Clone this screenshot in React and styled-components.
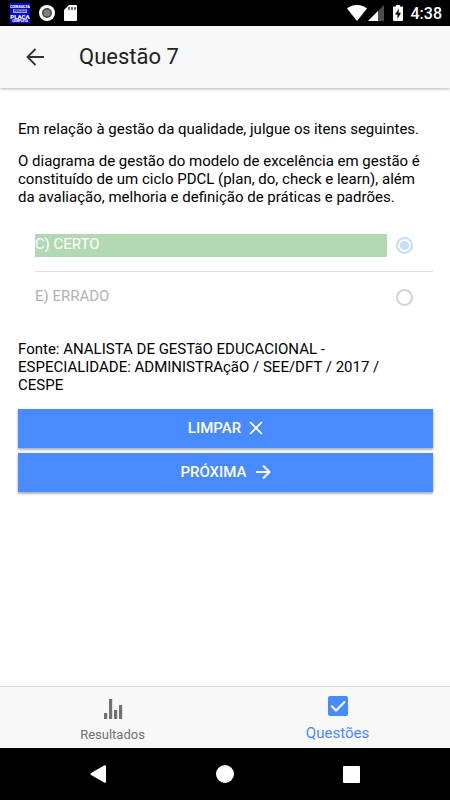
import React, { useState } from "react";
import styled, { createGlobalStyle } from "styled-components";

const GlobalStyle = createGlobalStyle`
  * {
    box-sizing: border-box;
  }
  body {
    margin: 0;
    background: #fff;
    color: #000;
    font-family: Roboto, "Liberation Sans", sans-serif;
  }
`;

const Page = styled.div`
  min-height: 100vh;
  display: flex;
  flex-direction: column;
`;

/* Android status bar */
const StatusBar = styled.div`
  height: 26px;
  padding: 0 8px 0 10px;
  display: flex;
  align-items: center;
  justify-content: space-between;
  background: #000;
  color: #fff;
`;

const StatusGroup = styled.div`
  display: flex;
  align-items: center;
  gap: ${({ $gap }) => $gap}px;
  svg {
    display: block;
  }
`;

const Clock = styled.span`
  padding: 2px 0 0 3px;
  font-size: 16px;
  font-weight: 500;
  line-height: 24px;
`;

const Header = styled.header`
  height: 62px;
  padding: 0 24px;
  display: flex;
  align-items: center;
  gap: 33px;
  background: #f8f8f8;
  box-shadow: 0 1px 3px rgba(0, 0, 0, 0.3);
`;

const BackButton = styled.button`
  padding: 0;
  border: 0;
  background: none;
  color: #333;
  cursor: pointer;
  svg {
    display: block;
  }
`;

const Title = styled.h1`
  margin: 0;
  font-size: 22px;
  font-weight: 400;
  line-height: 28px;
  color: #222;
`;

const Content = styled.main`
  flex: 1;
  padding: 32px 17px 16px 18px;
`;

const Paragraph = styled.p`
  margin: 0 0 14px;
  font-size: 15px;
  line-height: 18px;
`;

const Source = styled(Paragraph)`
  padding-right: 16px;
`;

const Options = styled.div`
  margin: 0 0 17px 17px;
`;

const Option = styled.label`
  padding: 14px 20px 14px 0;
  display: flex;
  align-items: center;
  gap: 9px;
  & + & {
    border-top: 1px solid #dedede;
  }
`;

const OptionText = styled.span`
  flex: 1;
  height: 23px;
  font-size: 15px;
  line-height: 20px;
  color: ${({ $correct }) => ($correct ? "#fff" : "#b2b2b2")};
  background: ${({ $correct }) => ($correct ? "#b2d9b2" : "transparent")};
`;

const Radio = styled.input`
  appearance: none;
  width: 17px;
  height: 17px;
  margin: 0;
  border: 2px solid #d3d3d3;
  border-radius: 50%;
  &:checked {
    border-color: #c7dbff;
    background: radial-gradient(circle, #c7dbff 4px, transparent 5px);
  }
`;

const Actions = styled.div`
  margin-top: 15px;
  display: flex;
  flex-direction: column;
  gap: 5px;
`;

const ActionButton = styled.button`
  height: 39px;
  padding: 0 6px 2px;
  border: 0;
  display: flex;
  align-items: center;
  justify-content: center;
  gap: 8px;
  background: #488aff;
  color: #fff;
  font-family: inherit;
  font-size: 15px;
  font-weight: 500;
  box-shadow: 0 2px 2px rgba(0, 0, 0, 0.2), 0 1px 3px rgba(0, 0, 0, 0.2);
  cursor: pointer;
`;

const Tabs = styled.nav`
  height: 62px;
  display: flex;
  background: #f8f8f8;
  border-top: 1px solid #dedede;
`;

const Tab = styled.a`
  flex: 1;
  display: flex;
  flex-direction: column;
  align-items: center;
  justify-content: flex-end;
  gap: ${({ $active }) => ($active ? 7 : 8)}px;
  padding-bottom: 5px;
  color: ${({ $active }) => ($active ? "#488aff" : "#727272")};
  font-size: ${({ $active }) => ($active ? 15 : 13)}px;
  line-height: ${({ $active }) => ($active ? 20 : 16)}px;
  text-decoration: none;
`;

const SystemBar = styled.div`
  height: 52px;
  padding: 0 35px;
  display: flex;
  align-items: center;
  justify-content: space-between;
  background: #000;
`;

const SystemButton = styled.button`
  flex: 1;
  height: 100%;
  padding: 0;
  border: 0;
  display: flex;
  align-items: center;
  justify-content: center;
  background: none;
`;

const AppLogo = () => (
  <svg width="20" height="20" viewBox="0 0 20 20">
    <rect width="20" height="20" fill="#0808d8" />
    <rect x="3" y="6" width="14" height="4" fill="#a4a4d4" />
    <g fill="#fff" textAnchor="middle" fontFamily="Roboto, sans-serif" fontWeight="900">
      <text x="10" y="5" fontSize="4">CONSULTA</text>
      <text x="10" y="9" fontSize="3" fill="#22226c">VEICULO</text>
      <text x="10" y="16" fontSize="6">PLACA</text>
      <text x="10" y="19" fontSize="3">COMPLETA</text>
    </g>
  </svg>
);

const RecordIcon = () => (
  <svg width="16" height="16" viewBox="0 0 16 16">
    <circle cx="8" cy="8" r="8" fill="#fff" />
    <circle cx="8" cy="8" r="5" fill="#444" />
    <circle cx="8" cy="8" r="3.5" fill="#808080" />
  </svg>
);

const SdCardIcon = () => (
  <svg width="13" height="16" viewBox="0 0 13 16">
    <path d="M5 0h7a1 1 0 0 1 1 1v14a1 1 0 0 1-1 1H1a1 1 0 0 1-1-1V5z" fill="#fff" />
    <path d="M5 2v3M8 2v3M11 2v3" stroke="#222" strokeWidth="1.3" />
  </svg>
);

const WifiIcon = () => (
  <svg width="20" height="16" viewBox="0 0 20 16">
    <path d="M0 3.5C6-1.2 14-1.2 20 3.5L10 16z" fill="#fff" />
  </svg>
);

const SignalIcon = () => (
  <svg width="16" height="16" viewBox="0 0 16 16">
    <path d="M16 0v16H0z" fill="#4d4d4d" />
    <path d="M10 6v10H0z" fill="#fff" />
  </svg>
);

const BatteryIcon = () => (
  <svg width="10" height="16" viewBox="0 0 10 16">
    <path d="M3 0h4v1.5h2a1 1 0 0 1 1 1V15a1 1 0 0 1-1 1H1a1 1 0 0 1-1-1V2.5a1 1 0 0 1 1-1h2z" fill="#fff" />
    <path d="M6 3.5L2 9.5h2.5V14L8 7.8H5.5z" fill="#000" />
  </svg>
);

const ArrowLeft = () => (
  <svg width="22" height="22" viewBox="0 0 22 22" fill="none" stroke="currentColor" strokeWidth="1.8">
    <path d="M20 11H4M11.5 3L3.5 11l8 8" />
  </svg>
);

const ArrowRight = () => (
  <svg width="16" height="16" viewBox="0 0 16 16" fill="none" stroke="currentColor" strokeWidth="2">
    <path d="M1 8h13M8 1.5L14.5 8 8 14.5" />
  </svg>
);

const CloseIcon = () => (
  <svg width="14" height="14" viewBox="0 0 14 14" fill="none" stroke="currentColor" strokeWidth="1.8">
    <path d="M1.2 1.2l11.6 11.6M12.8 1.2L1.2 12.8" />
  </svg>
);

const StatsIcon = () => (
  <svg width="20" height="20" viewBox="0 0 20 20" fill="currentColor">
    <path d="M1 14h3.2v6H1zM6 0h3.2v20H6zM11 11h3.2v9H11zM16 6h3.2v14H16z" />
  </svg>
);

const CheckboxIcon = () => (
  <svg width="20" height="20" viewBox="0 0 20 20">
    <rect width="20" height="20" rx="2" fill="#488aff" />
    <path d="M3.3 9.8l4.7 4.7 9-9" fill="none" stroke="#fff" strokeWidth="2" />
  </svg>
);

const options = [
  { id: "C", text: "C) CERTO", correct: true },
  { id: "E", text: "E) ERRADO", correct: false },
];

const App = () => {
  const [answer, setAnswer] = useState("C");

  return (
    <Page>
      <GlobalStyle />
      <StatusBar>
        <StatusGroup $gap={9}>
          <AppLogo />
          <RecordIcon />
          <SdCardIcon />
        </StatusGroup>
        <StatusGroup $gap={9}>
          <StatusGroup $gap={1}>
            <WifiIcon />
            <SignalIcon />
          </StatusGroup>
          <StatusGroup $gap={5}>
            <BatteryIcon />
            <Clock>4:38</Clock>
          </StatusGroup>
        </StatusGroup>
      </StatusBar>

      <Header>
        <BackButton aria-label="Voltar">
          <ArrowLeft />
        </BackButton>
        <Title>Questão 7</Title>
      </Header>

      <Content>
        <Paragraph>Em relação à gestão da qualidade, julgue os itens seguintes.</Paragraph>
        <Paragraph>
          O diagrama de gestão do modelo de excelência em gestão é constituído de um ciclo PDCL
          (plan, do, check e learn), além da avaliação, melhoria e definição de práticas e padrões.
        </Paragraph>

        {/* the answers are locked once one was picked */}
        <Options role="radiogroup">
          {options.map((option) => (
            <Option key={option.id}>
              <OptionText $correct={option.correct && answer !== null}>{option.text}</OptionText>
              <Radio
                type="radio"
                name="answer"
                value={option.id}
                checked={answer === option.id}
                disabled={answer !== null}
                onChange={() => setAnswer(option.id)}
              />
            </Option>
          ))}
        </Options>

        <Source>
          Fonte: ANALISTA DE GESTãO EDUCACIONAL - ESPECIALIDADE: ADMINISTRAçãO / SEE/DFT / 2017 / CESPE
        </Source>

        <Actions>
          <ActionButton onClick={() => setAnswer(null)}>
            LIMPAR <CloseIcon />
          </ActionButton>
          <ActionButton>
            PRÓXIMA <ArrowRight />
          </ActionButton>
        </Actions>
      </Content>

      <Tabs>
        <Tab href="#resultados">
          <StatsIcon />
          Resultados
        </Tab>
        <Tab href="#questoes" $active>
          <CheckboxIcon />
          Questões
        </Tab>
      </Tabs>

      <SystemBar>
        <SystemButton aria-label="Voltar">
          <svg width="16" height="18" viewBox="0 0 16 18">
            <path d="M14.5 0.3Q16 0 16 1.5v15q0 1.5-1.5 1.2L0.7 9.8Q0 9 0.7 8.2z" fill="#fff" />
          </svg>
        </SystemButton>
        <SystemButton aria-label="Início">
          <svg width="18" height="18" viewBox="0 0 18 18">
            <circle cx="9" cy="9" r="9" fill="#fff" />
          </svg>
        </SystemButton>
        <SystemButton aria-label="Recentes">
          <svg width="17" height="17" viewBox="0 0 17 17">
            <rect width="17" height="17" rx="1" fill="#fff" />
          </svg>
        </SystemButton>
      </SystemBar>
    </Page>
  );
};

export default App;
